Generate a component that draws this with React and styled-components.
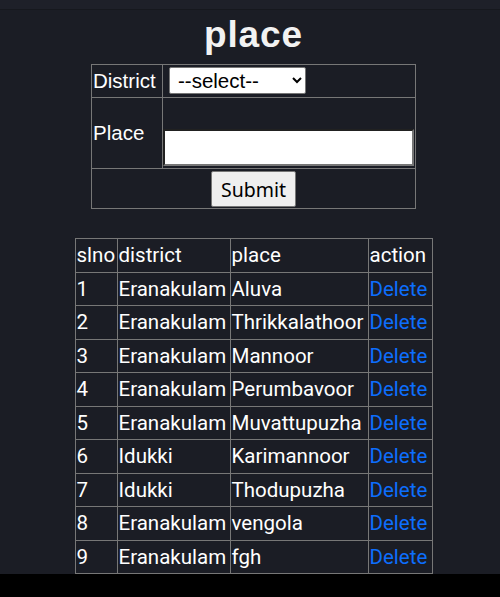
import React from "react";
import styled, { createGlobalStyle } from "styled-components";

const Global = createGlobalStyle`
  html { background: #000; }
  body { margin: 0; background: #000; color: #fff; }
`;

const TopBar = styled.div`
  height: 9px;
  background: #1e2029;
  border-bottom: 1px solid #16181e;
`;

const Main = styled.main`
  background: #1b1d25;
  display: flex;
  flex-direction: column;
  align-items: center;
  padding-left: 7px;
`;

const Title = styled.h1`
  margin: 6px 0 0;
  font-family: "Liberation Sans", Arial, sans-serif;
  font-weight: 700;
  font-size: 37px;
  letter-spacing: 0.9px;
  line-height: 38px;
  color: #f2f2f2;
  height: 48px;
`;

const FormTable = styled.table`
  border-collapse: collapse;
  border: 1px solid #777;
  font-family: "Liberation Sans", Arial, sans-serif;
  font-size: 20.5px;
  color: #fff;
`;

const FormRow = styled.tr`
  height: ${(p) => p.$h}px;
`;

const Label = styled.td`
  border: 1px solid #777;
  padding: 0 1px;
  width: 68px;
  vertical-align: middle;
`;

const Field = styled.td`
  border: 1px solid #777;
  padding: 0 1px 1px 1px;
  width: 250px;
  vertical-align: ${(p) => (p.$bottom ? "bottom" : "middle")};
  text-align: ${(p) => (p.$center ? "center" : "left")};
`;

const Select = styled.select`
  font-family: "Liberation Sans", Arial, sans-serif;
  font-size: 20.5px;
  height: 27px;
  width: 137px;
  margin-left: 5px;
  padding: 0 4px;
  background: #fff;
  color: #000;
  border: 1px solid #767676;
  border-radius: 2px;
`;

const TextInput = styled.input`
  display: block;
  box-sizing: border-box;
  width: 251px;
  height: 37px;
  margin: 0 0 1px -1px;
  border: 2px inset #767676;
  background: #fff;
`;

const Button = styled.button`
  font-family: "Noto Sans", Roboto, sans-serif;
  font-size: 19.5px;
  height: 36px;
  padding: 0 9px;
  background: #efefef;
  color: #000;
  border: 1px solid #767676;
  border-radius: 2px;
  margin: 2px 0 0;
`;

const DataTable = styled.table`
  margin-top: 29px;
  border-collapse: collapse;
  border: 1px solid #777;
  font-family: Roboto, "Noto Sans", sans-serif;
  font-size: 20.5px;
  color: #fff;
`;

const Cell = styled.td`
  border: 1px solid #777;
  padding: 1px 1px;
  line-height: 30.5px;
  white-space: nowrap;
  width: ${(p) => p.$w}px;
  text-align: left;
  font-weight: 400;
`;

const HeadCell = styled(Cell).attrs({ as: "th" })``;

const DeleteLink = styled.a`
  color: #0d6efd;
  text-decoration: none;
  cursor: pointer;
`;

const rows = [
  ["Eranakulam", "Aluva"],
  ["Eranakulam", "Thrikkalathoor"],
  ["Eranakulam", "Mannoor"],
  ["Eranakulam", "Perumbavoor"],
  ["Eranakulam", "Muvattupuzha"],
  ["Idukki", "Karimannoor"],
  ["Idukki", "Thodupuzha"],
  ["Eranakulam", "vengola"],
  ["Eranakulam", "fgh"],
];

const widths = [39, 110, 135, 61];

export default function App() {
  return (
    <>
      <Global />
      <TopBar />
      <Main>
        <Title>place</Title>
        <FormTable>
          <tbody>
            <FormRow $h={33}>
              <Label>District</Label>
              <Field>
                <Select defaultValue="">
                  <option value="">--select--</option>
                  <option>Eranakulam</option>
                  <option>Idukki</option>
                </Select>
              </Field>
            </FormRow>
            <FormRow $h={71}>
              <Label>Place</Label>
              <Field $bottom>
                <TextInput type="text" />
              </Field>
            </FormRow>
            <FormRow $h={39}>
              <Field colSpan={2} $center>
                <Button type="button">Submit</Button>
              </Field>
            </FormRow>
          </tbody>
        </FormTable>
        <DataTable>
          <thead>
            <tr>
              <HeadCell $w={widths[0]}>slno</HeadCell>
              <HeadCell $w={widths[1]}>district</HeadCell>
              <HeadCell $w={widths[2]}>place</HeadCell>
              <HeadCell $w={widths[3]}>action</HeadCell>
            </tr>
          </thead>
          <tbody>
            {rows.map(([d, p], i) => (
              <tr key={i}>
                <Cell>{i + 1}</Cell>
                <Cell>{d}</Cell>
                <Cell>{p}</Cell>
                <Cell>
                  <DeleteLink>Delete</DeleteLink>
                </Cell>
              </tr>
            ))}
          </tbody>
        </DataTable>
      </Main>
    </>
  );
}
